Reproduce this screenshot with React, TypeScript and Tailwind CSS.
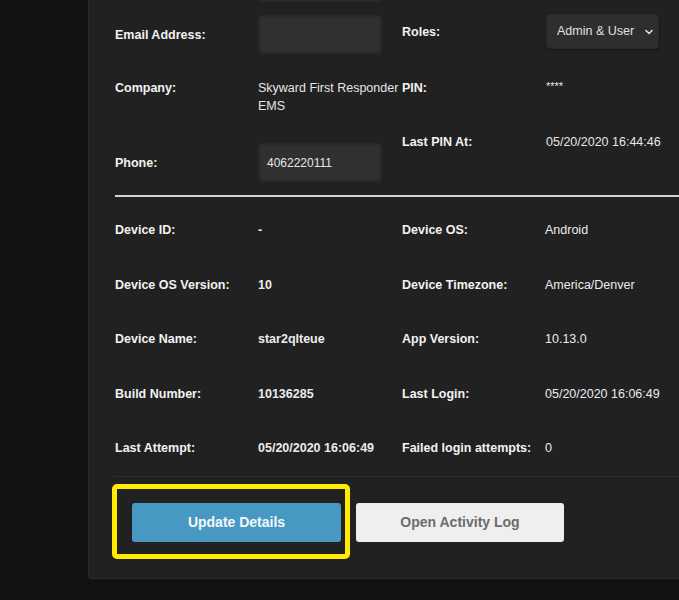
import { Fragment } from "react";
import { ChevronDown } from "lucide-react";

const font = { fontFamily: '"Liberation Sans", Arial, sans-serif' };

type Field = { label: string; value: string; bold?: boolean };

const device: Field[][] = [
  [
    { label: "Device ID:", value: "-", bold: true },
    { label: "Device OS:", value: "Android" },
  ],
  [
    { label: "Device OS Version:", value: "10", bold: true },
    { label: "Device Timezone:", value: "America/Denver" },
  ],
  [
    { label: "Device Name:", value: "star2qlteue", bold: true },
    { label: "App Version:", value: "10.13.0" },
  ],
  [
    { label: "Build Number:", value: "10136285", bold: true },
    { label: "Last Login:", value: "05/20/2020 16:06:49" },
  ],
  [
    { label: "Last Attempt:", value: "05/20/2020 16:06:49", bold: true },
    { label: "Failed login attempts:", value: "0" },
  ],
];

function Label({ children }: { children: React.ReactNode }) {
  return <span className="text-[12.5px] font-bold leading-[18px] text-[#f2f2f2]">{children}</span>;
}

function TextInput({ value = "" }: { value?: string }) {
  return (
    <div className="flex h-[39px] w-[124px] items-center rounded-[4px] border border-[#282828] bg-[#303030] px-2 text-[12px] text-[#e6e6e6] shadow-[inset_0_0_3px_rgba(0,0,0,0.35)]">
      {value}
    </div>
  );
}

export default function App() {
  return (
    <div className="flex h-[600px] w-[679px] overflow-hidden bg-[#121212]" style={font}>
      <div className="ml-[88px] -mt-[40px] flex h-[619px] w-[640px] shrink-0 flex-col rounded-bl-[4px] border-b border-l border-[#2b2b2b] bg-[#212121] pl-[26px]">
        {/* top form */}
        <div className="grid grid-cols-[287px_1fr]">
          <div className="flex flex-col pt-[3px]">
            <div className="grid grid-cols-[143px_1fr] items-center">
              <span />
              <TextInput />
            </div>
            <div className="mt-[13px] grid grid-cols-[143px_1fr] items-center">
              <Label>Email Address:</Label>
              <TextInput />
            </div>
            <div className="mt-[25px] grid grid-cols-[143px_1fr] items-start">
              <Label>Company:</Label>
              <span className="text-[12.5px] leading-[18px] text-[#e6e6e6]">Skyward First Responder EMS</span>
            </div>
            <div className="mt-[28px] grid grid-cols-[143px_1fr] items-center">
              <Label>Phone:</Label>
              <TextInput value="4062220111" />
            </div>
          </div>
          <div className="flex flex-col pt-[54px]">
            <div className="grid grid-cols-[144px_1fr] items-center">
              <Label>Roles:</Label>
              <div className="flex h-[35px] w-[113px] items-center justify-between rounded-[4px] border border-[#282828] bg-[#2e2e2e] pl-[10px] pr-[3px] text-[12.5px] text-[#e0e0e0] shadow-[0_1px_2px_rgba(0,0,0,0.4)]">
                <span>Admin &amp; User</span>
                <ChevronDown size={12} strokeWidth={3.2} className="text-[#e0e0e0]" />
              </div>
            </div>
            <div className="mt-[30px] grid grid-cols-[144px_1fr] items-start">
              <Label>PIN:</Label>
              <span className="text-[11px] leading-[14px] text-[#e6e6e6]">****</span>
            </div>
            <div className="mt-[36px] grid grid-cols-[144px_1fr] items-center">
              <Label>Last PIN At:</Label>
              <span className="text-[12.5px] leading-[18px] text-[#e6e6e6]">05/20/2020 16:44:46</span>
            </div>
          </div>
        </div>

        <div className="mt-[13px] h-[2px] bg-[#d4d4d4]" />

        {/* device info */}
        <div className="mt-[6px] flex flex-col">
          {device.map((row, i) => (
            <div key={i} className="grid h-[54.5px] grid-cols-[143px_144px_143px_1fr] items-center">
              {row.map((f) => (
                <Fragment key={f.label}>
                  <Label>{f.label}</Label>
                  <span className={`text-[12.5px] leading-[18px] text-[#ececec] ${f.bold ? "font-bold" : ""}`}>
                    {f.value}
                  </span>
                </Fragment>
              ))}
            </div>
          ))}
        </div>

        <div className="-ml-[1px] border-t border-[#2e2e2e] pb-[36px] pt-[26px]">
          <div className="flex items-center gap-[15px] pl-[18px]">
            <div className="relative">
              <button className="h-[39px] w-[209px] rounded-[3px] bg-[#4798c3] text-[14px] font-bold text-[#f4f8fb]">
                Update Details
              </button>
              <div className="pointer-events-none absolute -left-[20px] -right-[9px] -top-[19px] -bottom-[17px] rounded-[5px] border-[5px] border-[#ffec00]" />
            </div>
            <button className="h-[39px] w-[208px] rounded-[3px] bg-[#efefef] text-[14px] font-bold text-[#6c6c6c]">
              Open Activity Log
            </button>
          </div>
        </div>
      </div>
    </div>
  );
}
